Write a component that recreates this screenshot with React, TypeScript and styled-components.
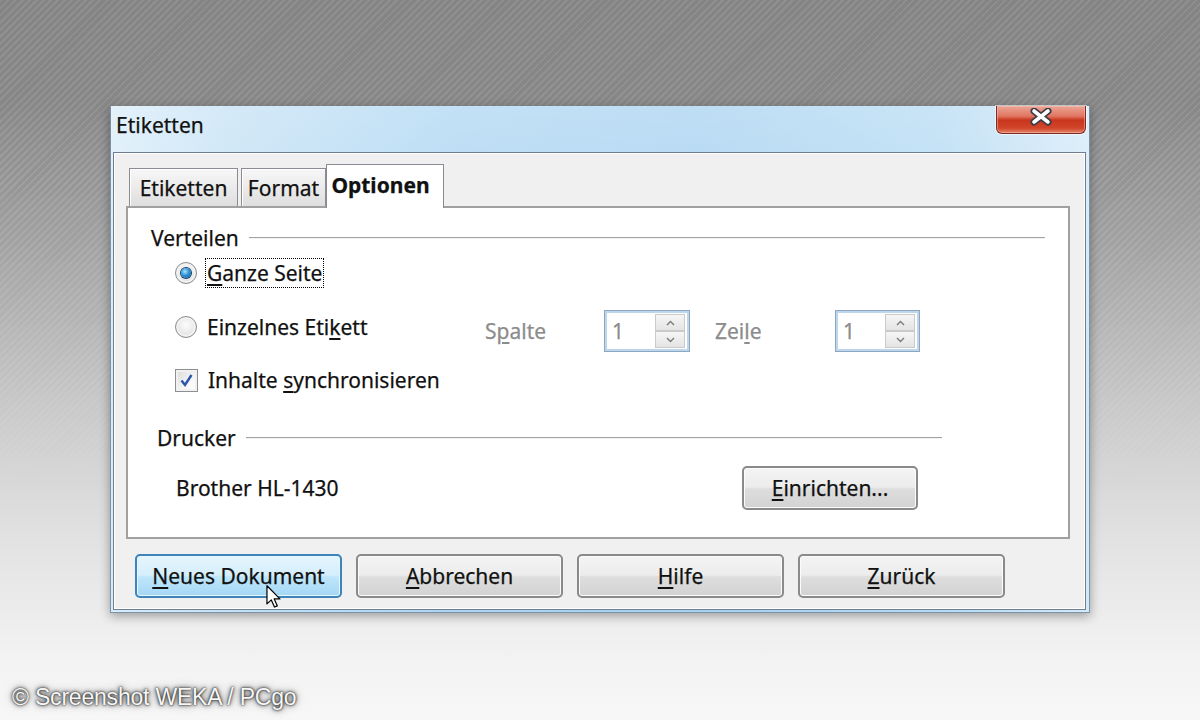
import React from "react";
import styled, { createGlobalStyle } from "styled-components";

const GlobalStyle = createGlobalStyle`
  html, body { margin: 0; padding: 0; }
  body { font-family: "Noto Sans", "DejaVu Sans", sans-serif; }
`;

const Page = styled.div`
  position: relative;
  width: 1200px;
  height: 720px;
  overflow: hidden;
  display: flex;
  flex-direction: column;
  background: linear-gradient(
    180deg,
    #8a8a8a 0%,
    #8d8d8d 14%,
    #a8a8a8 34%,
    #cbcbcb 56%,
    #e3e3e3 76%,
    #f2f2f2 91%,
    #f7f7f7 100%
  );
  &::before {
    content: "";
    position: absolute;
    inset: 0;
    pointer-events: none;
    background: repeating-linear-gradient(
      135deg,
      rgba(255, 255, 255, 0.05) 0 2px,
      rgba(0, 0, 0, 0.04) 2px 5px
    );
    -webkit-mask-image: linear-gradient(180deg, #000 0%, #000 25%, transparent 70%);
    mask-image: linear-gradient(180deg, #000 0%, #000 25%, transparent 70%);
  }
`;

const Window = styled.div`
  position: relative;
  z-index: 1;
  margin: 106px 0 0 110px;
  width: 980px;
  height: 507px;
  box-sizing: border-box;
  border: 1px solid #7d93a8;
  border-top: none;
  padding: 0 3px 2px 2px;
  display: flex;
  flex-direction: column;
  -webkit-text-stroke: 0.25px currentColor;
  background: linear-gradient(180deg, rgba(255, 255, 255, 0.28) 0%, rgba(255, 255, 255, 0) 45%),
    linear-gradient(90deg, #d9ecf9 0%, #c4e1f5 12%, #acd5f2 35%, #a5d1f0 60%, #b5daf3 85%, #d4e9f8 100%);
  box-shadow: 0 3px 10px rgba(0, 0, 0, 0.35);
`;

const TitleBar = styled.div`
  height: 46px;
  box-sizing: border-box;
  padding: 7px 0 0 3px;
  font-size: 21px;
  line-height: 24px;
  color: #111;
`;

const CloseButton = styled.div`
  position: absolute;
  top: 0;
  right: 3px;
  width: 90px;
  height: 28px;
  box-sizing: border-box;
  display: flex;
  justify-content: center;
  align-items: flex-start;
  padding-top: 2px;
  border: 1px solid #7b2b1f;
  border-top: none;
  border-radius: 0 0 6px 6px;
  background: linear-gradient(
    180deg,
    #eba697 0%,
    #e07560 38%,
    #c9361d 52%,
    #d1452a 82%,
    #e4866a 100%
  );
  box-shadow: 0 0 0 1px rgba(255, 255, 255, 0.55), inset 0 0 0 1px rgba(255, 200, 190, 0.45);
`;

const Client = styled.div`
  flex: 1;
  display: flex;
  flex-direction: column;
  background: #f0f0f0;
  border: 1px solid #6f7e8e;
  box-shadow: inset 0 0 0 1px #ffffff;
  padding: 11px 15px 0 12px;
`;

const TabStrip = styled.div`
  position: relative;
  z-index: 2;
  display: flex;
  align-items: flex-end;
  height: 44px;
  margin-bottom: -2px;
  padding-left: 3px;
`;

const Tab = styled.div<{ $active?: boolean; $width: number; $gapAfter?: number }>`
  width: ${(p) => p.$width}px;
  box-sizing: border-box;
  display: flex;
  align-items: center;
  justify-content: center;
  font-size: 21px;
  color: #111;
  border: 1px solid #898c92;
  border-bottom: none;
  margin-right: ${(p) => p.$gapAfter ?? 0}px;
  height: ${(p) => (p.$active ? 44 : 38)}px;
  margin-bottom: ${(p) => (p.$active ? 0 : 2)}px;
  font-weight: ${(p) => (p.$active ? 700 : 400)};
  padding: 0 ${(p) => (p.$active ? 9 : 0)}px ${(p) => (p.$active ? 4 : 0)}px 0;
  background: ${(p) =>
    p.$active ? "#ffffff" : "linear-gradient(180deg, #f7f7f7 0%, #ebebeb 50%, #dedede 100%)"};
  box-shadow: inset 1px 1px 0 #ffffff;
`;

const Panel = styled.div`
  height: 333px;
  box-sizing: border-box;
  background: #ffffff;
  border: 2px solid #a0a0a0;
  display: flex;
  flex-direction: column;
  padding-top: 18px;
`;

const SectionHeader = styled.div<{ $indent: number; $endGap: number; $top?: number }>`
  display: flex;
  align-items: center;
  gap: 10px;
  height: 24px;
  margin: ${(p) => p.$top ?? 0}px ${(p) => p.$endGap}px 0 ${(p) => p.$indent}px;
  font-size: 21px;
  color: #111;
`;

const Rule = styled.div`
  flex: 1;
  height: 1px;
  background: #a2a2a2;
  border-bottom: 1px solid #f2f2f2;
`;

const Row = styled.div<{ $top: number; $height: number }>`
  display: flex;
  align-items: center;
  margin-top: ${(p) => p.$top}px;
  height: ${(p) => p.$height}px;
  margin-left: 47px;
  font-size: 21px;
  color: #111;
`;

const Option = styled.label<{ $width?: number; $lift?: number }>`
  display: flex;
  align-items: center;
  gap: 8px;
  width: ${(p) => (p.$width ? `${p.$width}px` : "auto")};
  margin-bottom: ${(p) => p.$lift ?? 0}px;
`;

const OptionText = styled.span<{ $focused?: boolean }>`
  border: 1px dotted ${(p) => (p.$focused ? "#000" : "transparent")};
  padding: 0 1px;
  line-height: 28px;
  white-space: nowrap;
`;

const Radio = styled.span<{ $checked?: boolean }>`
  width: 22px;
  height: 22px;
  box-sizing: border-box;
  border-radius: 50%;
  border: 1px solid #8a8c8e;
  background: radial-gradient(circle at 50% 40%, #fdfdfd 0%, #e8e8e8 55%, #cdcdcd 100%);
  box-shadow: inset 0 0 0 2px #f3f3f3;
  display: flex;
  align-items: center;
  justify-content: center;
  flex-shrink: 0;
  &::after {
    content: "";
    display: ${(p) => (p.$checked ? "block" : "none")};
    width: 10px;
    height: 10px;
    border-radius: 50%;
    background: radial-gradient(circle at 40% 35%, #a6e6ff 0%, #2e93d6 45%, #0b4f8d 100%);
    box-shadow: 0 0 0 1px #123f6c;
  }
`;

const CheckBox = styled.span`
  width: 23px;
  height: 23px;
  box-sizing: border-box;
  border: 1px solid #8d8f91;
  background: linear-gradient(135deg, #d9d9d9 0%, #f6f6f6 60%, #ffffff 100%);
  box-shadow: inset 0 0 0 2px #f1f1f1;
  display: flex;
  align-items: center;
  justify-content: center;
  flex-shrink: 0;
`;

const DisabledLabel = styled.span<{ $width: number; $before?: number }>`
  width: ${(p) => p.$width}px;
  margin-left: ${(p) => p.$before ?? 0}px;
  color: #8c8c8c;
  white-space: nowrap;
`;

const Spin = styled.div<{ $width: number }>`
  width: ${(p) => p.$width}px;
  height: 42px;
  box-sizing: border-box;
  border: 1px solid #8ea6be;
  box-shadow: inset 0 0 0 2px #bcd6ee;
  background: #ffffff;
  display: flex;
  align-items: center;
  justify-content: space-between;
  padding: 0 4px 0 7px;
  color: #8c8c8c;
`;

const SpinButtons = styled.div`
  display: flex;
  flex-direction: column;
  width: 30px;
  height: 34px;
`;

const SpinHalf = styled.div`
  flex: 1;
  box-sizing: border-box;
  border: 1px solid #cacaca;
  background: linear-gradient(180deg, #f6f6f6 0%, #e4e4e4 100%);
  display: flex;
  align-items: center;
  justify-content: center;
`;

const PrinterRow = styled.div`
  display: flex;
  align-items: center;
  justify-content: space-between;
  margin: 16px 150px 0 48px;
  height: 44px;
  font-size: 21px;
  color: #111;
`;

const Button = styled.div<{ $width: number; $hot?: boolean }>`
  position: relative;
  width: ${(p) => p.$width}px;
  height: 44px;
  box-sizing: border-box;
  display: flex;
  align-items: center;
  justify-content: center;
  font-size: 21px;
  color: #111;
  border-radius: 5px;
  border: 2px solid ${(p) => (p.$hot ? "#3c84ba" : "#8a8a8a")};
  box-shadow: inset 0 0 0 1px ${(p) => (p.$hot ? "#e6f6ff" : "#fbfbfb")};
  background: ${(p) =>
    p.$hot
      ? "linear-gradient(180deg, #e6f5fd 0%, #d5eefb 48%, #bfe6fc 52%, #a4d7f4 100%)"
      : "linear-gradient(180deg, #f4f4f4 0%, #ececec 48%, #dedede 52%, #d2d2d2 100%)"};
`;

const ButtonRow = styled.div`
  display: flex;
  gap: 14px;
  margin-top: 15px;
  padding-left: 9px;
`;

const Cursor = styled.svg`
  position: absolute;
  left: 129px;
  top: 29px;
  width: 15px;
  height: 23px;
`;

const Mn = styled.span`
  text-decoration: underline;
  text-decoration-thickness: 1.5px;
  text-underline-offset: 3px;
`;

const Watermark = styled.div`
  position: relative;
  z-index: 1;
  margin: auto 0 10px 12px;
  font-family: "Liberation Sans", Arial, sans-serif;
  font-size: 23px;
  line-height: 26px;
  color: #f6f6f6;
  letter-spacing: -0.2px;
  text-shadow: 0 0 2px rgba(0, 0, 0, 0.95), 0 0 4px rgba(0, 0, 0, 0.75), 0 0 8px rgba(0, 0, 0, 0.5);
`;

const UpArrow = () => (
  <svg width="9" height="6" viewBox="0 0 9 6">
    <path d="M1 5 L4.5 1.5 L8 5" fill="none" stroke="#7b7b7b" strokeWidth="1.4" />
  </svg>
);
const DownArrow = () => (
  <svg width="9" height="6" viewBox="0 0 9 6">
    <path d="M1 1 L4.5 4.5 L8 1" fill="none" stroke="#7b7b7b" strokeWidth="1.4" />
  </svg>
);

const SpinBox = ({ width }: { width: number }) => (
  <Spin $width={width}>
    <span>1</span>
    <SpinButtons>
      <SpinHalf>
        <UpArrow />
      </SpinHalf>
      <SpinHalf>
        <DownArrow />
      </SpinHalf>
    </SpinButtons>
  </Spin>
);

export default function App() {
  return (
    <>
      <GlobalStyle />
      <Page>
        <Window>
          <TitleBar>Etiketten</TitleBar>
          <CloseButton>
            <svg width="28" height="18" viewBox="0 0 28 18">
              <path d="M7 3 L21 14 M21 3 L7 14" stroke="#3a3a48" strokeWidth="7" strokeLinecap="round" />
              <path d="M7 3 L21 14 M21 3 L7 14" stroke="#ffffff" strokeWidth="3.6" strokeLinecap="round" />
            </svg>
          </CloseButton>
          <Client>
            <TabStrip>
              <Tab $width={109} $gapAfter={3}>
                Etiketten
              </Tab>
              <Tab $width={85}>Format</Tab>
              <Tab $width={118} $active>
                Optionen
              </Tab>
            </TabStrip>
            <Panel>
              <SectionHeader $indent={23} $endGap={23}>
                Verteilen
                <Rule />
              </SectionHeader>
              <Row $top={8} $height={30}>
                <Option>
                  <Radio $checked />
                  <OptionText $focused>
                    <Mn>G</Mn>anze Seite
                  </OptionText>
                </Option>
              </Row>
              <Row $top={22} $height={42}>
                <Option $width={310} $lift={8}>
                  <Radio />
                  <OptionText>
                    Einzelnes Eti<Mn>k</Mn>ett
                  </OptionText>
                </Option>
                <DisabledLabel $width={119}>
                  S<Mn>p</Mn>alte
                </DisabledLabel>
                <SpinBox width={86} />
                <DisabledLabel $width={120} $before={25}>
                  Zei<Mn>l</Mn>e
                </DisabledLabel>
                <SpinBox width={85} />
              </Row>
              <Row $top={13} $height={30}>
                <Option>
                  <CheckBox>
                    <svg width="15" height="15" viewBox="0 0 15 15">
                      <path d="M2.5 7.5 L6 12 L12.5 2" fill="none" stroke="#2a55a8" strokeWidth="2.4" />
                    </svg>
                  </CheckBox>
                  <OptionText>
                    Inhalte <Mn>s</Mn>ynchronisieren
                  </OptionText>
                </Option>
              </Row>
              <SectionHeader $indent={29} $endGap={126} $top={31}>
                Drucker
                <Rule />
              </SectionHeader>
              <PrinterRow>
                <span>Brother HL-1430</span>
                <Button $width={176}>
                  <span>
                    <Mn>E</Mn>inrichten...
                  </span>
                </Button>
              </PrinterRow>
            </Panel>
            <ButtonRow>
              <Button $width={207} $hot>
                <span>
                  <Mn>N</Mn>eues Dokument
                </span>
                <Cursor viewBox="0 0 12 19">
                  <path
                    d="M0.6 0.6 L0.6 15.6 L4.2 12.3 L6.8 18.2 L9.1 17.2 L6.6 11.5 L11.3 11.5 Z"
                    fill="#ffffff"
                    stroke="#000000"
                    strokeWidth="1"
                    strokeLinejoin="round"
                  />
                </Cursor>
              </Button>
              <Button $width={207}>
                <span>
                  <Mn>A</Mn>bbrechen
                </span>
              </Button>
              <Button $width={207}>
                <span>
                  <Mn>H</Mn>ilfe
                </span>
              </Button>
              <Button $width={207}>
                <span>
                  <Mn>Z</Mn>urück
                </span>
              </Button>
            </ButtonRow>
          </Client>
        </Window>
        <Watermark>© Screenshot WEKA / PCgo</Watermark>
      </Page>
    </>
  );
}
